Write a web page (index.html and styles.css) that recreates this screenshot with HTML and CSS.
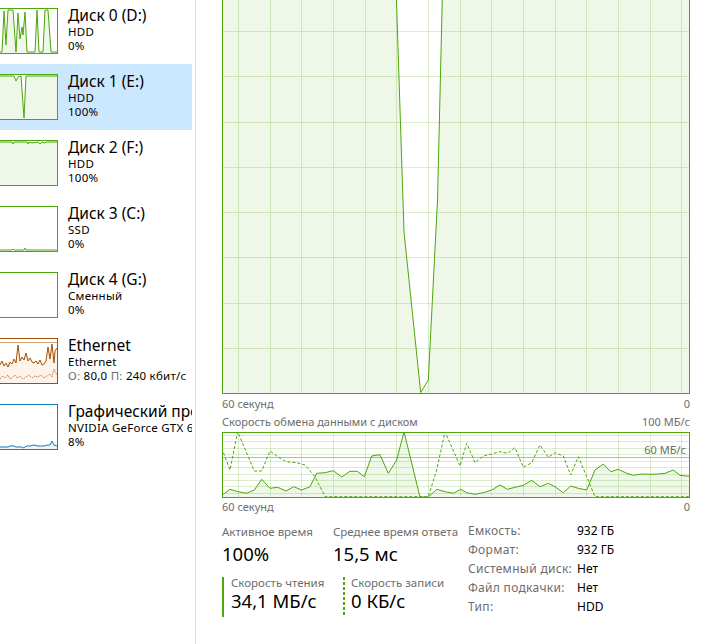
FILE: index.html
```html
<!DOCTYPE html>
<html lang="ru">
<head>
    <meta charset="UTF-8">
    <title>Диспетчер задач — Производительность</title>
    <link rel="stylesheet" href="styles.css">
</head>
<body>
<div class="app">

    <nav class="sidebar">
        <div class="list">
            <div class="item">
                <svg class="thumb disk" viewBox="0 0 57 44" preserveAspectRatio="none">
                    <polygon class="fill" points="0,44 2,44 4,2 6,36 8,1 13,1 16,43 18,4 20,30 22,18 23,26 25,3 27,43 35,43 37,1 39,43 43,43 45,1 48,1 51,43 57,43 57,44"/>
                    <polyline class="line" points="0,43 2,43 4,2 6,36 8,1 13,1 16,43 18,4 20,30 22,18 23,26 25,3 27,43 35,43 37,1 39,43 43,43 45,1 48,1 51,43 57,43"/>
                </svg>
                <div class="info">
                    <div class="name">Диск 0 (D:)</div>
                    <div class="sub">HDD</div>
                    <div class="sub">0%</div>
                </div>
            </div>
            <div class="item selected">
                <svg class="thumb disk" viewBox="0 0 57 44" preserveAspectRatio="none">
                    <polygon class="fill" points="0,1 14,1 16,6 18,2 21,1 24,43 26,1 57,1 57,44 0,44"/>
                    <polyline class="line" points="0,1 14,1 16,6 18,2 21,1 24,43 26,1 57,1"/>
                </svg>
                <div class="info">
                    <div class="name">Диск 1 (E:)</div>
                    <div class="sub">HDD</div>
                    <div class="sub">100%</div>
                </div>
            </div>
            <div class="item">
                <svg class="thumb disk" viewBox="0 0 57 44" preserveAspectRatio="none">
                    <polygon class="fill" points="0,1 12,1 13,3 14,1 27,1 28,3 29,1 32,2 38,1 40,3 42,1 45,2 46,1 57,1 57,44 0,44"/>
                    <polyline class="line" points="0,1 12,1 13,3 14,1 27,1 28,3 29,1 32,2 38,1 40,3 42,1 45,2 46,1 57,1"/>
                </svg>
                <div class="info">
                    <div class="name">Диск 2 (F:)</div>
                    <div class="sub">HDD</div>
                    <div class="sub">100%</div>
                </div>
            </div>
            <div class="item">
                <svg class="thumb disk" viewBox="0 0 57 44" preserveAspectRatio="none">
                    <polyline class="line" points="0,43 12,43 13,42 14,43 24,43 25,41 26,43 57,43"/>
                </svg>
                <div class="info">
                    <div class="name">Диск 3 (C:)</div>
                    <div class="sub">SSD</div>
                    <div class="sub">0%</div>
                </div>
            </div>
            <div class="item">
                <svg class="thumb disk" viewBox="0 0 57 44" preserveAspectRatio="none"></svg>
                <div class="info">
                    <div class="name">Диск 4 (G:)</div>
                    <div class="sub">Сменный</div>
                    <div class="sub">0%</div>
                </div>
            </div>
            <div class="item">
                <svg class="thumb net" viewBox="0 0 57 44" preserveAspectRatio="none">
                    <line class="scale" x1="0" y1="3.5" x2="57" y2="3.5"/>
                    <polygon class="fill" points="0,26 2,22 4,27 6,24 8,28 10,23 12,25 14,20 16,24 18,6 20,22 22,18 24,21 26,14 28,22 30,19 32,23 34,24 36,22 38,25 40,21 42,26 44,25 46,22 48,8 50,20 52,5 54,24 55,12 57,9 57,44 0,44"/>
                    <polyline class="line dots" points="0,40 3,37 5,39 8,36 10,40 13,38 15,36 17,39 20,37 23,40 26,38 29,36 32,39 35,37 38,38 41,36 44,39 47,37 50,35 52,38 54,30 57,36"/>
                    <polyline class="line" points="0,26 2,22 4,27 6,24 8,28 10,23 12,25 14,20 16,24 18,6 20,22 22,18 24,21 26,14 28,22 30,19 32,23 34,24 36,22 38,25 40,21 42,26 44,25 46,22 48,8 50,20 52,5 54,24 55,12 57,9"/>
                </svg>
                <div class="info">
                    <div class="name">Ethernet</div>
                    <div class="sub">Ethernet</div>
                    <div class="sub"><span class="muted">О:</span> 80,0 <span class="muted">П:</span> 240 кбит/с</div>
                </div>
            </div>
            <div class="item">
                <svg class="thumb gpu" viewBox="0 0 57 44" preserveAspectRatio="none">
                    <polygon class="fill" points="0,42 8,42 10,41 14,41 16,42 22,42 24,43 26,41 30,41 34,40 38,41 44,41 48,40 50,40 52,36 54,40 57,41 57,44 0,44"/>
                    <polyline class="line" points="0,42 8,42 10,41 14,41 16,42 22,42 24,43 26,41 30,41 34,40 38,41 44,41 48,40 50,40 52,36 54,40 57,41"/>
                </svg>
                <div class="info">
                    <div class="name">Графический процессор 0</div>
                    <div class="sub">NVIDIA GeForce GTX 660</div>
                    <div class="sub">8%</div>
                </div>
            </div>
        </div>
    </nav>

    <main class="detail">
        <div class="chart active-chart">
            <svg viewBox="223 -14 466 407" preserveAspectRatio="none">
                <polygon class="fill" points="223,-14 396,-14 404,232 420.7,392.5 428.3,380 437.5,200 442.6,-14 689,-14 689,393 223,393"/>
                <path class="grid" d="M238.5,-14V393 M270.5,-14V393 M301.5,-14V393 M333.5,-14V393 M365.5,-14V393 M396.5,-14V393 M428.5,-14V393 M460.5,-14V393 M491.5,-14V393 M523.5,-14V393 M555.5,-14V393 M586.5,-14V393 M618.5,-14V393 M650.5,-14V393 M681.5,-14V393
                    M223,31.5H689 M223,76.5H689 M223,122.5H689 M223,167.5H689 M223,212.5H689 M223,257.5H689 M223,303.5H689 M223,348.5H689"/>
                <polyline class="line" points="396,-14 404,232 420.7,392.5 428.3,380 437.5,200 442.6,-14"/>
            </svg>
        </div>
        <div class="axis"><span>60 секунд</span><span>0</span></div>
        <div class="axis caption"><span>Скорость обмена данными с диском</span><span>100 МБ/с</span></div>
        <div class="chart rate-chart">
            <svg viewBox="223 433 466 64" preserveAspectRatio="none">
                <polygon class="fill" points="222.3,495 230,489.3 238.3,491.7 246.7,493.3 254.3,490 261.7,479.3 270,488.3 277.7,487.3 286,491 293.7,486.7 301.7,490 310,486.7 316.7,473.3 325,472.7 333.3,470.7 341.7,477 350,471.3 357.3,471.3 364.3,476.7 371.7,456 380,454.7 388.3,473.3 396.7,460 404,431.7 420,497 428.3,497 436.7,489.3 445,491.7 453.3,493.3 460.7,489.3 466.7,492.7 475,494.3 483.3,492.7 491.7,490 500,485 507.3,489.3 515,487.3 523.3,485.3 531.7,480.3 540,486.7 548.3,483.3 555,486.7 563.3,492.7 570.7,486 578.3,488.3 586.7,490 595,470 603.3,464 610.7,471.7 618.3,469.3 626.7,473.3 633.3,475.3 641.7,474 650,474.3 658.3,474 665,473.3 673.3,470 680,475.3 689,476.3 689,497 222,497"/>
                <path class="grid" d="M238.5,433V497 M270.5,433V497 M301.5,433V497 M333.5,433V497 M365.5,433V497 M396.5,433V497 M428.5,433V497 M460.5,433V497 M491.5,433V497 M523.5,433V497 M555.5,433V497 M586.5,433V497 M618.5,433V497 M650.5,433V497 M681.5,433V497
                    M223,435.5H689 M223,441.5H689 M223,448.5H689 M223,454.5H689 M223,461.5H689 M223,467.5H689 M223,474.5H689 M223,480.5H689 M223,486.5H689 M223,493.5H689"/>
                <line class="limit" x1="223" y1="457.5" x2="689" y2="457.5"/>
                <polyline class="line dash" points="221.7,448 230,470 237.7,431.7 254.3,471 261.7,471 270,451 277.7,456.7 286,461.7 296.7,462.7 305,465 315,476.7 325,496.7 428.3,496.7 436.7,470 445,431.7 452.3,448.3 460,466 466.7,443.3 475,462.7 483.3,456 491.7,454 500,451.7 507.3,453.3 515,447.7 523.3,467.3 531.7,462.7 540,445 548.3,457.3 555,452.7 563.3,456 570.7,475 578.3,456.7 586.7,476.7 595,496.7 689,496.7"/>
                <polyline class="line" points="222.3,495 230,489.3 238.3,491.7 246.7,493.3 254.3,490 261.7,479.3 270,488.3 277.7,487.3 286,491 293.7,486.7 301.7,490 310,486.7 316.7,473.3 325,472.7 333.3,470.7 341.7,477 350,471.3 357.3,471.3 364.3,476.7 371.7,456 380,454.7 388.3,473.3 396.7,460 404,431.7 420,497 428.3,497 436.7,489.3 445,491.7 453.3,493.3 460.7,489.3 466.7,492.7 475,494.3 483.3,492.7 491.7,490 500,485 507.3,489.3 515,487.3 523.3,485.3 531.7,480.3 540,486.7 548.3,483.3 555,486.7 563.3,492.7 570.7,486 578.3,488.3 586.7,490 595,470 603.3,464 610.7,471.7 618.3,469.3 626.7,473.3 633.3,475.3 641.7,474 650,474.3 658.3,474 665,473.3 673.3,470 680,475.3 689,476.3"/>
            </svg>
            <span class="limit-label">60 МБ/с</span>
        </div>
        <div class="axis bottom-axis"><span>60 секунд</span><span>0</span></div>

        <div class="stats">
            <div class="metrics">
                <div class="metric-row">
                    <div class="metric wide">
                        <div class="label">Активное время</div>
                        <div class="value">100%</div>
                    </div>
                    <div class="metric">
                        <div class="label">Среднее время ответа</div>
                        <div class="value">15,5 мс</div>
                    </div>
                </div>
                <div class="metric-row io">
                    <div class="metric read">
                        <div class="label">Скорость чтения</div>
                        <div class="value">34,1 МБ/с</div>
                    </div>
                    <div class="metric write">
                        <div class="label">Скорость записи</div>
                        <div class="value">0 КБ/с</div>
                    </div>
                </div>
            </div>
            <dl class="props">
                <dt>Емкость:</dt><dd>932 ГБ</dd>
                <dt>Формат:</dt><dd>932 ГБ</dd>
                <dt>Системный диск:</dt><dd>Нет</dd>
                <dt>Файл подкачки:</dt><dd>Нет</dd>
                <dt>Тип:</dt><dd>HDD</dd>
            </dl>
        </div>
    </main>

</div>
</body>
</html>
```

FILE: styles.css
```css
/* Вкладка «Производительность»: список устройств слева, подробности справа */
* {
    box-sizing: border-box;
}
body {
    margin: 0;
    width: 713px;
    height: 644px;
    overflow: hidden;
    font-family: "Noto Sans", "Open Sans", sans-serif;
    color: #000;
    background: #fff;
}
.app {
    display: flex;
    height: 644px;
}

/* Список устройств */
.sidebar {
    width: 196px;
    flex: none;
    border-right: 1px solid #dadada;
}
.list {
    margin-top: -2px;
}
.item {
    width: 192px;
    height: 66px;
    display: flex;
    overflow: hidden;
}
.item.selected {
    background: #cce8ff;
}
.thumb {
    flex: none;
    width: 58px;
    height: 46px;
    margin-top: 10px;
    border: 1px solid;
    border-left: none;
    background: #fff;
}
.info {
    margin-left: 10px;
    padding-top: 6.5px;
    white-space: nowrap;
}
.name {
    font-size: 15.5px;
    line-height: 20px;
}
.sub {
    font-size: 11.5px;
    line-height: 14.7px;
    letter-spacing: 0.25px;
}
.muted {
    color: #6d6d6d;
}

/* Цвета графиков */
.disk { border-color: #4da60c; }
.disk .fill { fill: #eff7e9; }
.disk .line { stroke: #4da60c; }
.net { border-color: #a74f01; }
.net .fill { fill: #fcf3eb; }
.net .line { stroke: #a74f01; }
.net .dots { stroke-dasharray: 1.5 1; opacity: 0.7; }
.net .scale { stroke: #d9a57c; stroke-width: 1; }
.gpu { border-color: #117dbb; }
.gpu .fill { fill: #f1f6fa; }
.gpu .line { stroke: #117dbb; }
.thumb .line {
    fill: none;
    stroke-width: 1;
    vector-effect: non-scaling-stroke;
}

/* Подробности */
.detail {
    flex: 1;
    padding: 0 23px 0 26px;
    display: flex;
    flex-direction: column;
}
.chart {
    position: relative;
    border: 1px solid #4da60c;
    background: #fff;
}
.chart svg {
    display: block;
    width: 100%;
    height: 100%;
}
.chart .fill { fill: #eff7e9; }
.chart .grid {
    fill: none;
    stroke: rgba(77, 166, 12, 0.2);
    stroke-width: 1;
}
.chart .line {
    fill: none;
    stroke: #4da60c;
    stroke-width: 1;
}
.chart .dash {
    stroke-dasharray: 3 2;
}
.chart .limit {
    stroke: rgba(77, 166, 12, 0.55);
    stroke-width: 1;
}
.active-chart {
    margin-top: -15px;
    height: 409px;
}
.rate-chart {
    margin-top: 3px;
    height: 66px;
}
.limit-label {
    position: absolute;
    right: 3px;
    top: 9px;
    font-size: 11px;
    line-height: 15px;
    color: #6d6d6d;
}
.axis {
    display: flex;
    justify-content: space-between;
    margin-top: 2px;
    font-size: 11px;
    line-height: 15px;
    color: #6d6d6d;
}
.axis.caption {
    margin-top: 3px;
}
.axis.bottom-axis {
    margin-top: 1px;
}

/* Показатели */
.stats {
    display: flex;
    margin-top: 10px;
}
.metrics {
    width: 246px;
    flex: none;
}
.metric-row {
    display: flex;
}
.metric {
    white-space: nowrap;
}
.metric.wide {
    width: 111px;
}
.label {
    font-size: 11.5px;
    line-height: 15px;
    color: #6d6d6d;
}
.value {
    margin-top: 3px;
    font-size: 18.5px;
    line-height: 24px;
}
.metric-row.io {
    margin-top: 11px;
}
.read,
.write {
    height: 40px;
    padding-left: 7px;
}
.read {
    width: 121px;
    border-left: 2px solid #4da60c;
}
.write {
    padding-left: 8px;
    background: repeating-linear-gradient(to bottom, #4da60c 0 3px, transparent 3px 5px) left top / 2px 100% no-repeat;
}
.read .label,
.write .label {
    line-height: 11px;
}
.read .value,
.write .value {
    margin-top: 1px;
}
.props {
    display: grid;
    grid-template-columns: 109px auto;
    margin: -2px 0 0;
    font-size: 12px;
    line-height: 17.8px;
}
.props dt {
    color: #6d6d6d;
    letter-spacing: 0.3px;
}
.props dd {
    margin: 0;
}
```
